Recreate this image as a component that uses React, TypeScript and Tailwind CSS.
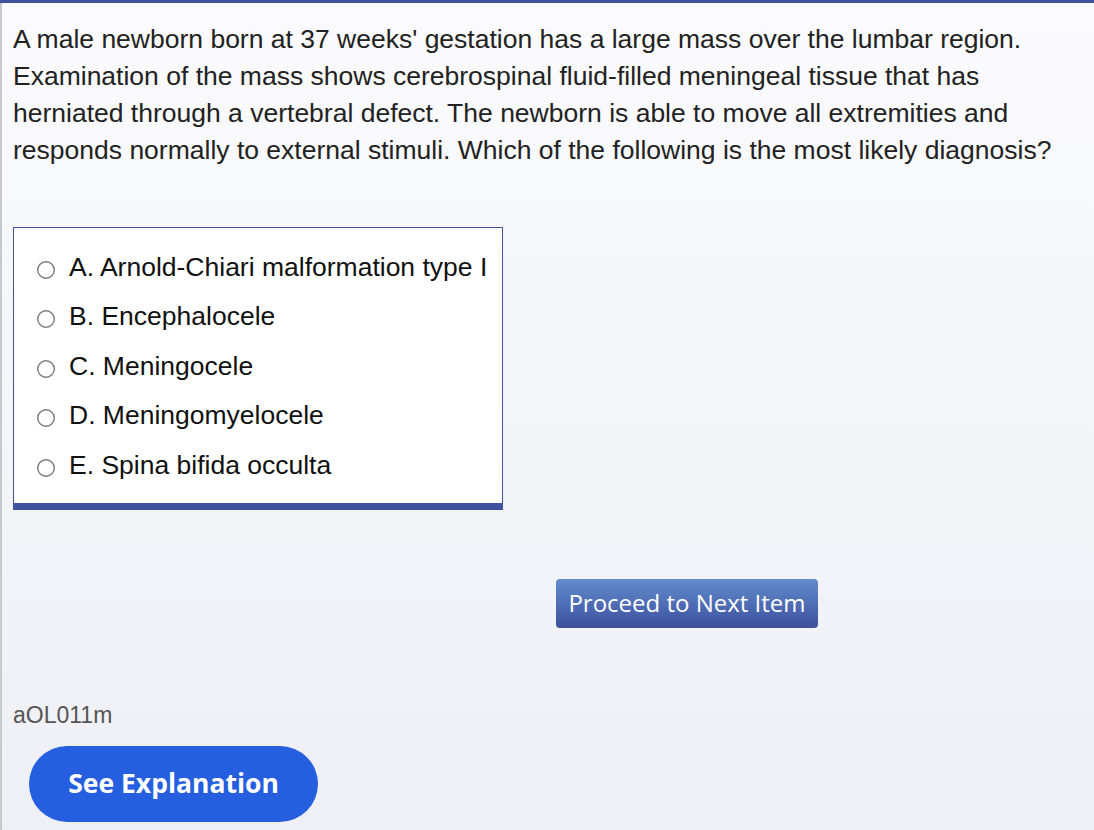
const options = [
  'A. Arnold-Chiari malformation type I',
  'B. Encephalocele',
  'C. Meningocele',
  'D. Meningomyelocele',
  'E. Spina bifida occulta',
];

const Radio = () => (
  <svg width="20" height="20" viewBox="0 0 20 20" className="shrink-0">
    <circle cx="10" cy="10" r="8.3" fill="white" stroke="#7a7a7a" strokeWidth="1.4" />
  </svg>
);

export default function App() {
  return (
    <div className="w-[1094px] h-[830px] overflow-hidden flex flex-col bg-gradient-to-b from-[#fbfbfd] to-[#eef0f6] font-['Liberation_Sans',Arial,sans-serif]">
      <div className="h-[3px] bg-[#3f51a0] shrink-0" />
      <div className="flex-1 border-l-2 border-[#c9c9cc] pl-[11px] pt-[18px]">
        <p className="text-[26.5px] leading-[37px] text-[#222] whitespace-nowrap">
          A male newborn born at 37 weeks' gestation has a large mass over the lumbar region.
          <br />
          Examination of the mass shows cerebrospinal fluid-filled meningeal tissue that has
          <br />
          herniated through a vertebral defect. The newborn is able to move all extremities and
          <br />
          responds normally to external stimuli. Which of the following is the most likely diagnosis?
        </p>

        <div className="mt-[58px] w-[490px] bg-white border border-[#3f51a0] border-b-[7px] pt-[15px] pb-[12px] pl-[22px]">
          {options.map((o) => (
            <div key={o} className="h-[49.5px] flex items-center gap-[13px]">
              <div className="pt-[4px]">
                <Radio />
              </div>
              <span className="text-[26.5px] text-[#111]">{o}</span>
            </div>
          ))}
        </div>

        <div className="mt-[69px] ml-[543px]">
          <button className="w-[262px] h-[49px] rounded-[4px] bg-gradient-to-b from-[#628dcc] to-[#3d4f9e] text-white text-[24px] font-['Open_Sans',sans-serif]">
            Proceed to Next Item
          </button>
        </div>

        <div className="mt-[75px] text-[23px] text-[#555] leading-[24px]">aOL011m</div>

        <button className="mt-[19px] ml-[16px] w-[289px] h-[76px] rounded-full bg-[#255fdf] text-white text-[26.5px] font-bold font-['Open_Sans',sans-serif]">
          See Explanation
        </button>
      </div>
    </div>
  );
}
